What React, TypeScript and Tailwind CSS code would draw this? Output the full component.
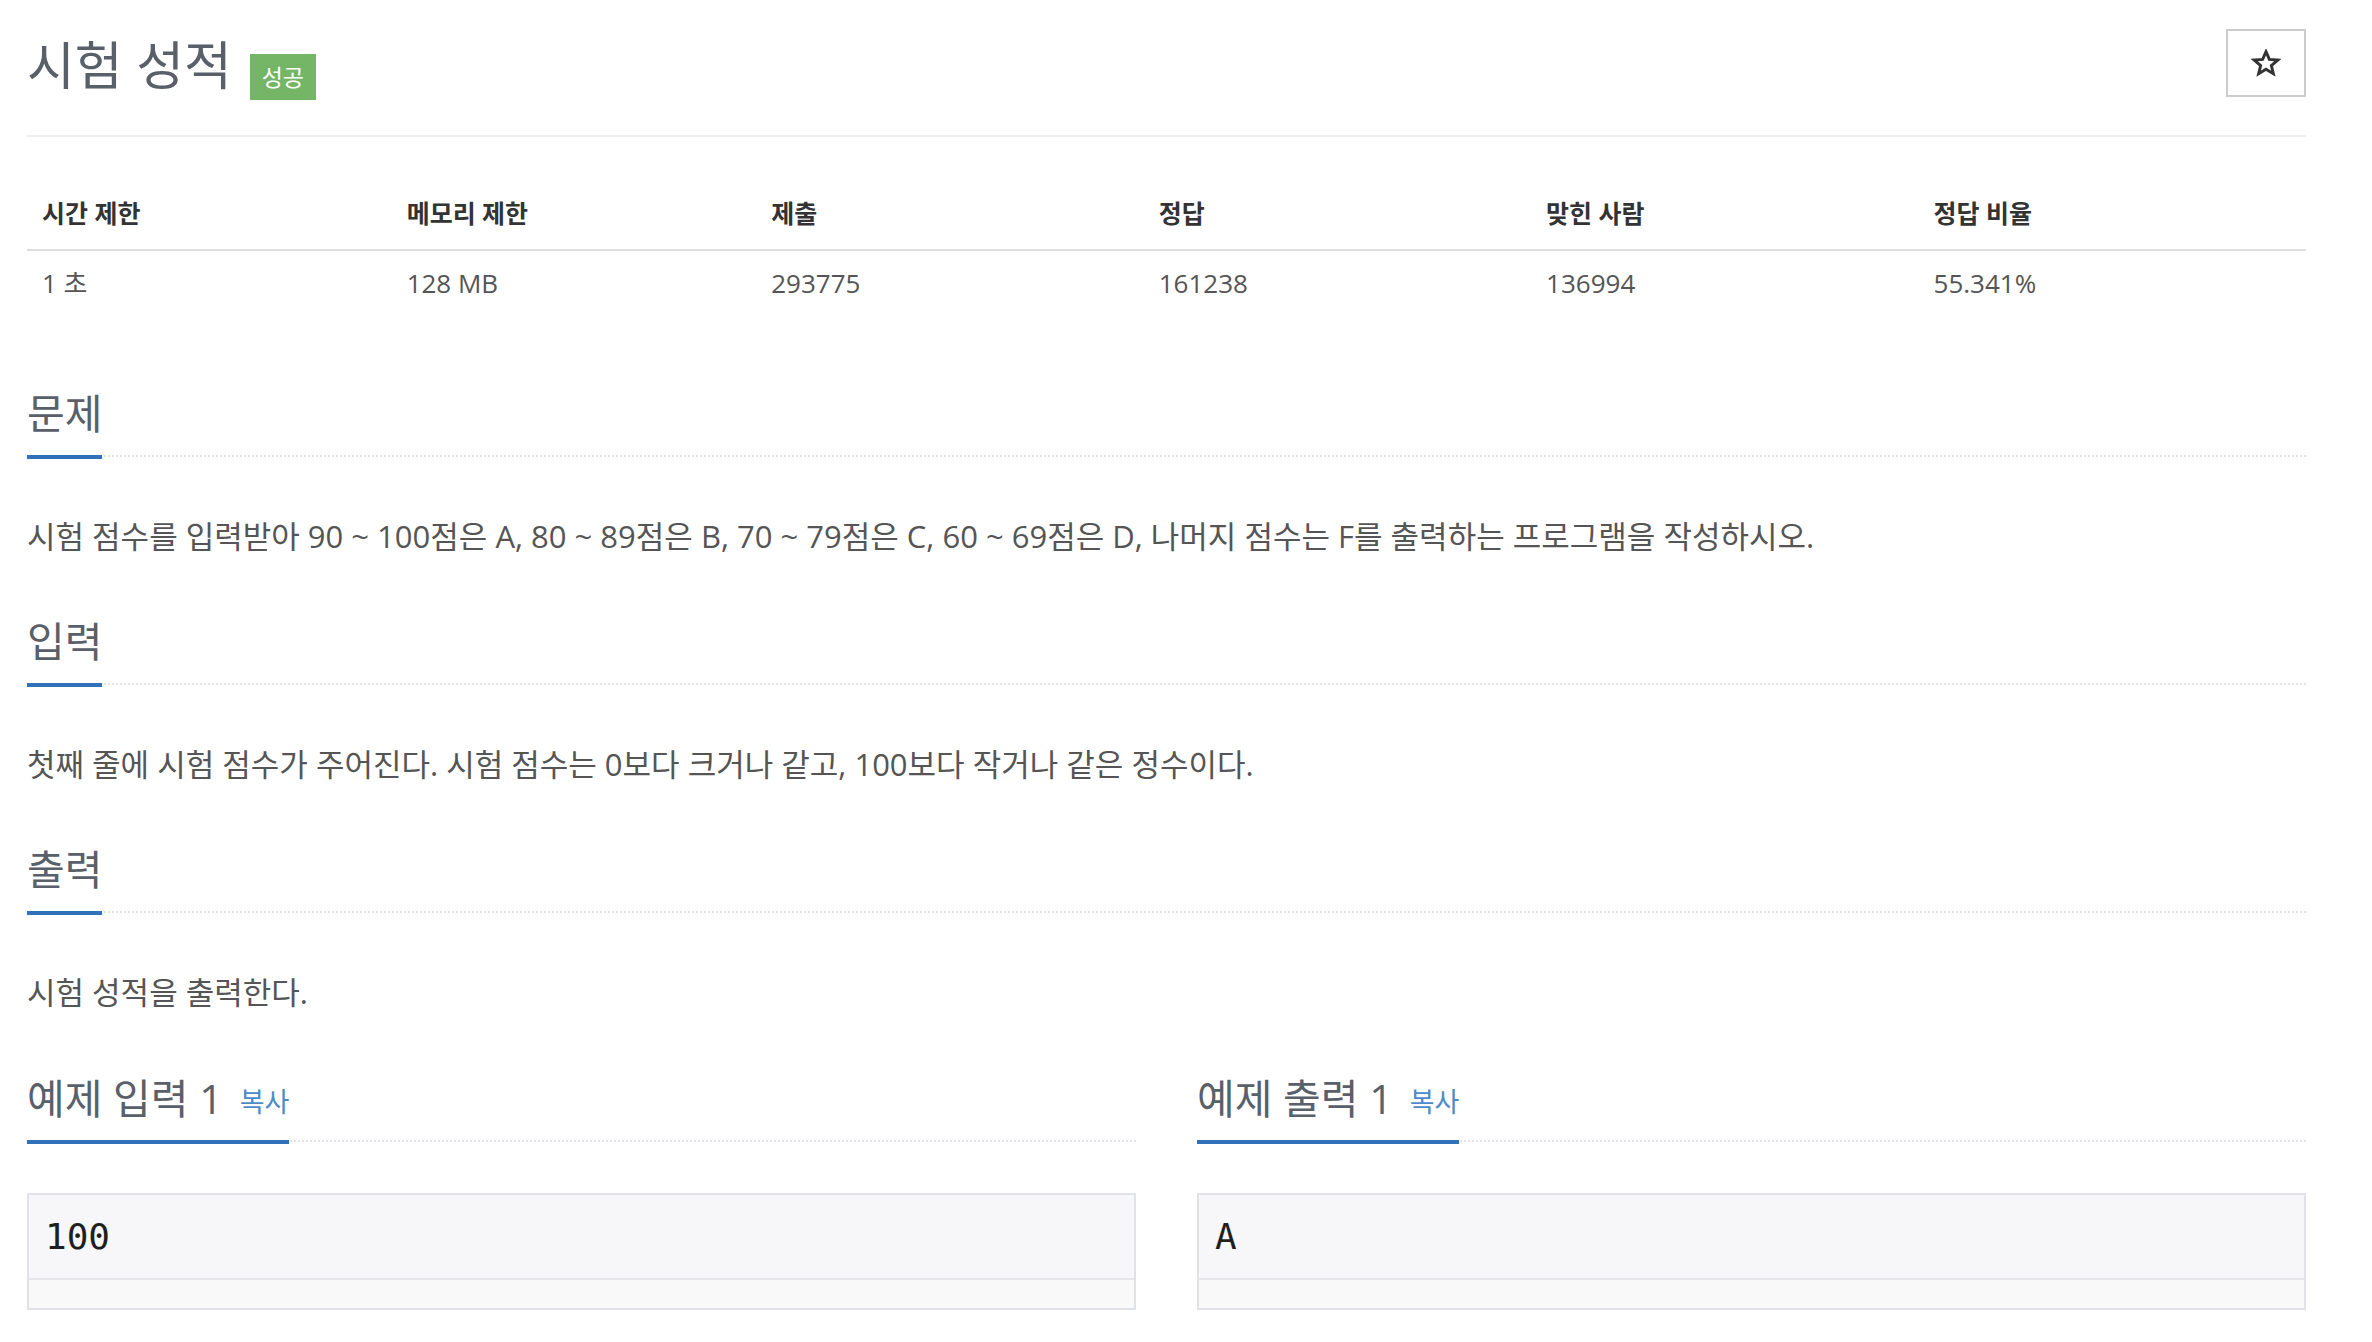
import React from 'react';

const stats = [
  { label: '시간 제한', value: '1 초' },
  { label: '메모리 제한', value: '128 MB' },
  { label: '제출', value: '293775' },
  { label: '정답', value: '161238' },
  { label: '맞힌 사람', value: '136994' },
  { label: '정답 비율', value: '55.341%' },
];

const sections = [
  {
    title: '문제',
    body: '시험 점수를 입력받아 90 ~ 100점은 A, 80 ~ 89점은 B, 70 ~ 79점은 C, 60 ~ 69점은 D, 나머지 점수는 F를 출력하는 프로그램을 작성하시오.',
  },
  {
    title: '입력',
    body: '첫째 줄에 시험 점수가 주어진다. 시험 점수는 0보다 크거나 같고, 100보다 작거나 같은 정수이다.',
  },
  {
    title: '출력',
    body: '시험 성적을 출력한다.',
  },
];

function Headline({ children }: { children: React.ReactNode }) {
  return (
    <div className="flex border-b-2 border-dotted border-[#e3e3ea]">
      <div className="flex items-end border-b-4 border-[#3071b9] pb-[20px] -mb-[4px]">{children}</div>
    </div>
  );
}

function StarIcon() {
  return (
    <svg width="30" height="28" viewBox="0 0 24 23" fill="none" stroke="#333" strokeWidth="2.4" strokeLinejoin="miter">
      <path d="M12 2.2l2.75 6.35 6.9.55-5.25 4.5 1.65 6.75L12 16.7l-6.05 3.65 1.65-6.75L2.35 9.1l6.9-.55L12 2.2z" />
    </svg>
  );
}

function Sample({ title, data }: { title: string; data: string }) {
  return (
    <div>
      <Headline>
        <h2 className="text-[41px] leading-[44px] text-[#59606a]">{title}</h2>
        <button className="ml-[17px] text-[27px] leading-[36px] text-[#4d8ac9]">복사</button>
      </Headline>
      <div className="mt-[51px] border-2 border-[#e1e1e8] bg-[#f7f7f9]">
        <pre className="h-[83px] flex items-center pl-[16px] font-['DejaVu_Sans_Mono',monospace] text-[36px] text-[#1f1f1f]">
          {data}
        </pre>
        <div className="h-[30px] border-t-2 border-[#e6e6ea] bg-[#f9f9fa]" />
      </div>
    </div>
  );
}

export default function App() {
  return (
    <div className="min-h-screen bg-white font-['Open_Sans','Noto_Sans_CJK_KR',sans-serif]">
      <div className="ml-[27px] w-[2279px]">
        {/* page header */}
        <div className="flex justify-between h-[137px] border-b-2 border-[#eee]">
          <div className="flex items-start">
            <h1 className="mt-[39px] text-[52px] leading-[52px] text-[#59606a]">시험 성적</h1>
            <span className="ml-[18px] mt-[54px] w-[66px] h-[46px] flex items-center justify-center bg-[#74b566] text-white text-[23px] leading-none">
              성공
            </span>
          </div>
          <button className="mt-[29px] w-[80px] h-[68px] border-2 border-[#ccc] flex items-center justify-center">
            <StarIcon />
          </button>
        </div>

        {/* info table */}
        <div className="mt-[61px] grid grid-cols-[16%_16%_17%_17%_17%_17%]">
          {stats.map((s) => (
            <div key={s.label} className="border-b-2 border-[#ddd] pl-[15px] pb-[21px] text-[25px] leading-[30px] font-bold text-[#333]">
              {s.label}
            </div>
          ))}
          {stats.map((s) => (
            <div key={s.value} className="pl-[15px] pt-[17px] pb-[12px] text-[26px] leading-[30px] text-[#555]">
              {s.value}
            </div>
          ))}
        </div>

        {/* sections */}
        <div className="mt-[81px]">
          {sections.map((sec, i) => (
            <section key={sec.title} className={i > 0 ? 'mt-[61px]' : ''}>
              <Headline>
                <h2 className="text-[41px] leading-[44px] text-[#59606a]">{sec.title}</h2>
              </Headline>
              <p className="mt-[57px] text-[31px] leading-[44px] text-[#555]">{sec.body}</p>
            </section>
          ))}
        </div>

        {/* samples */}
        <div className="mt-[62px] grid grid-cols-2 gap-[61px]">
          <Sample title="예제 입력 1" data="100" />
          <Sample title="예제 출력 1" data="A" />
        </div>
      </div>
    </div>
  );
}
